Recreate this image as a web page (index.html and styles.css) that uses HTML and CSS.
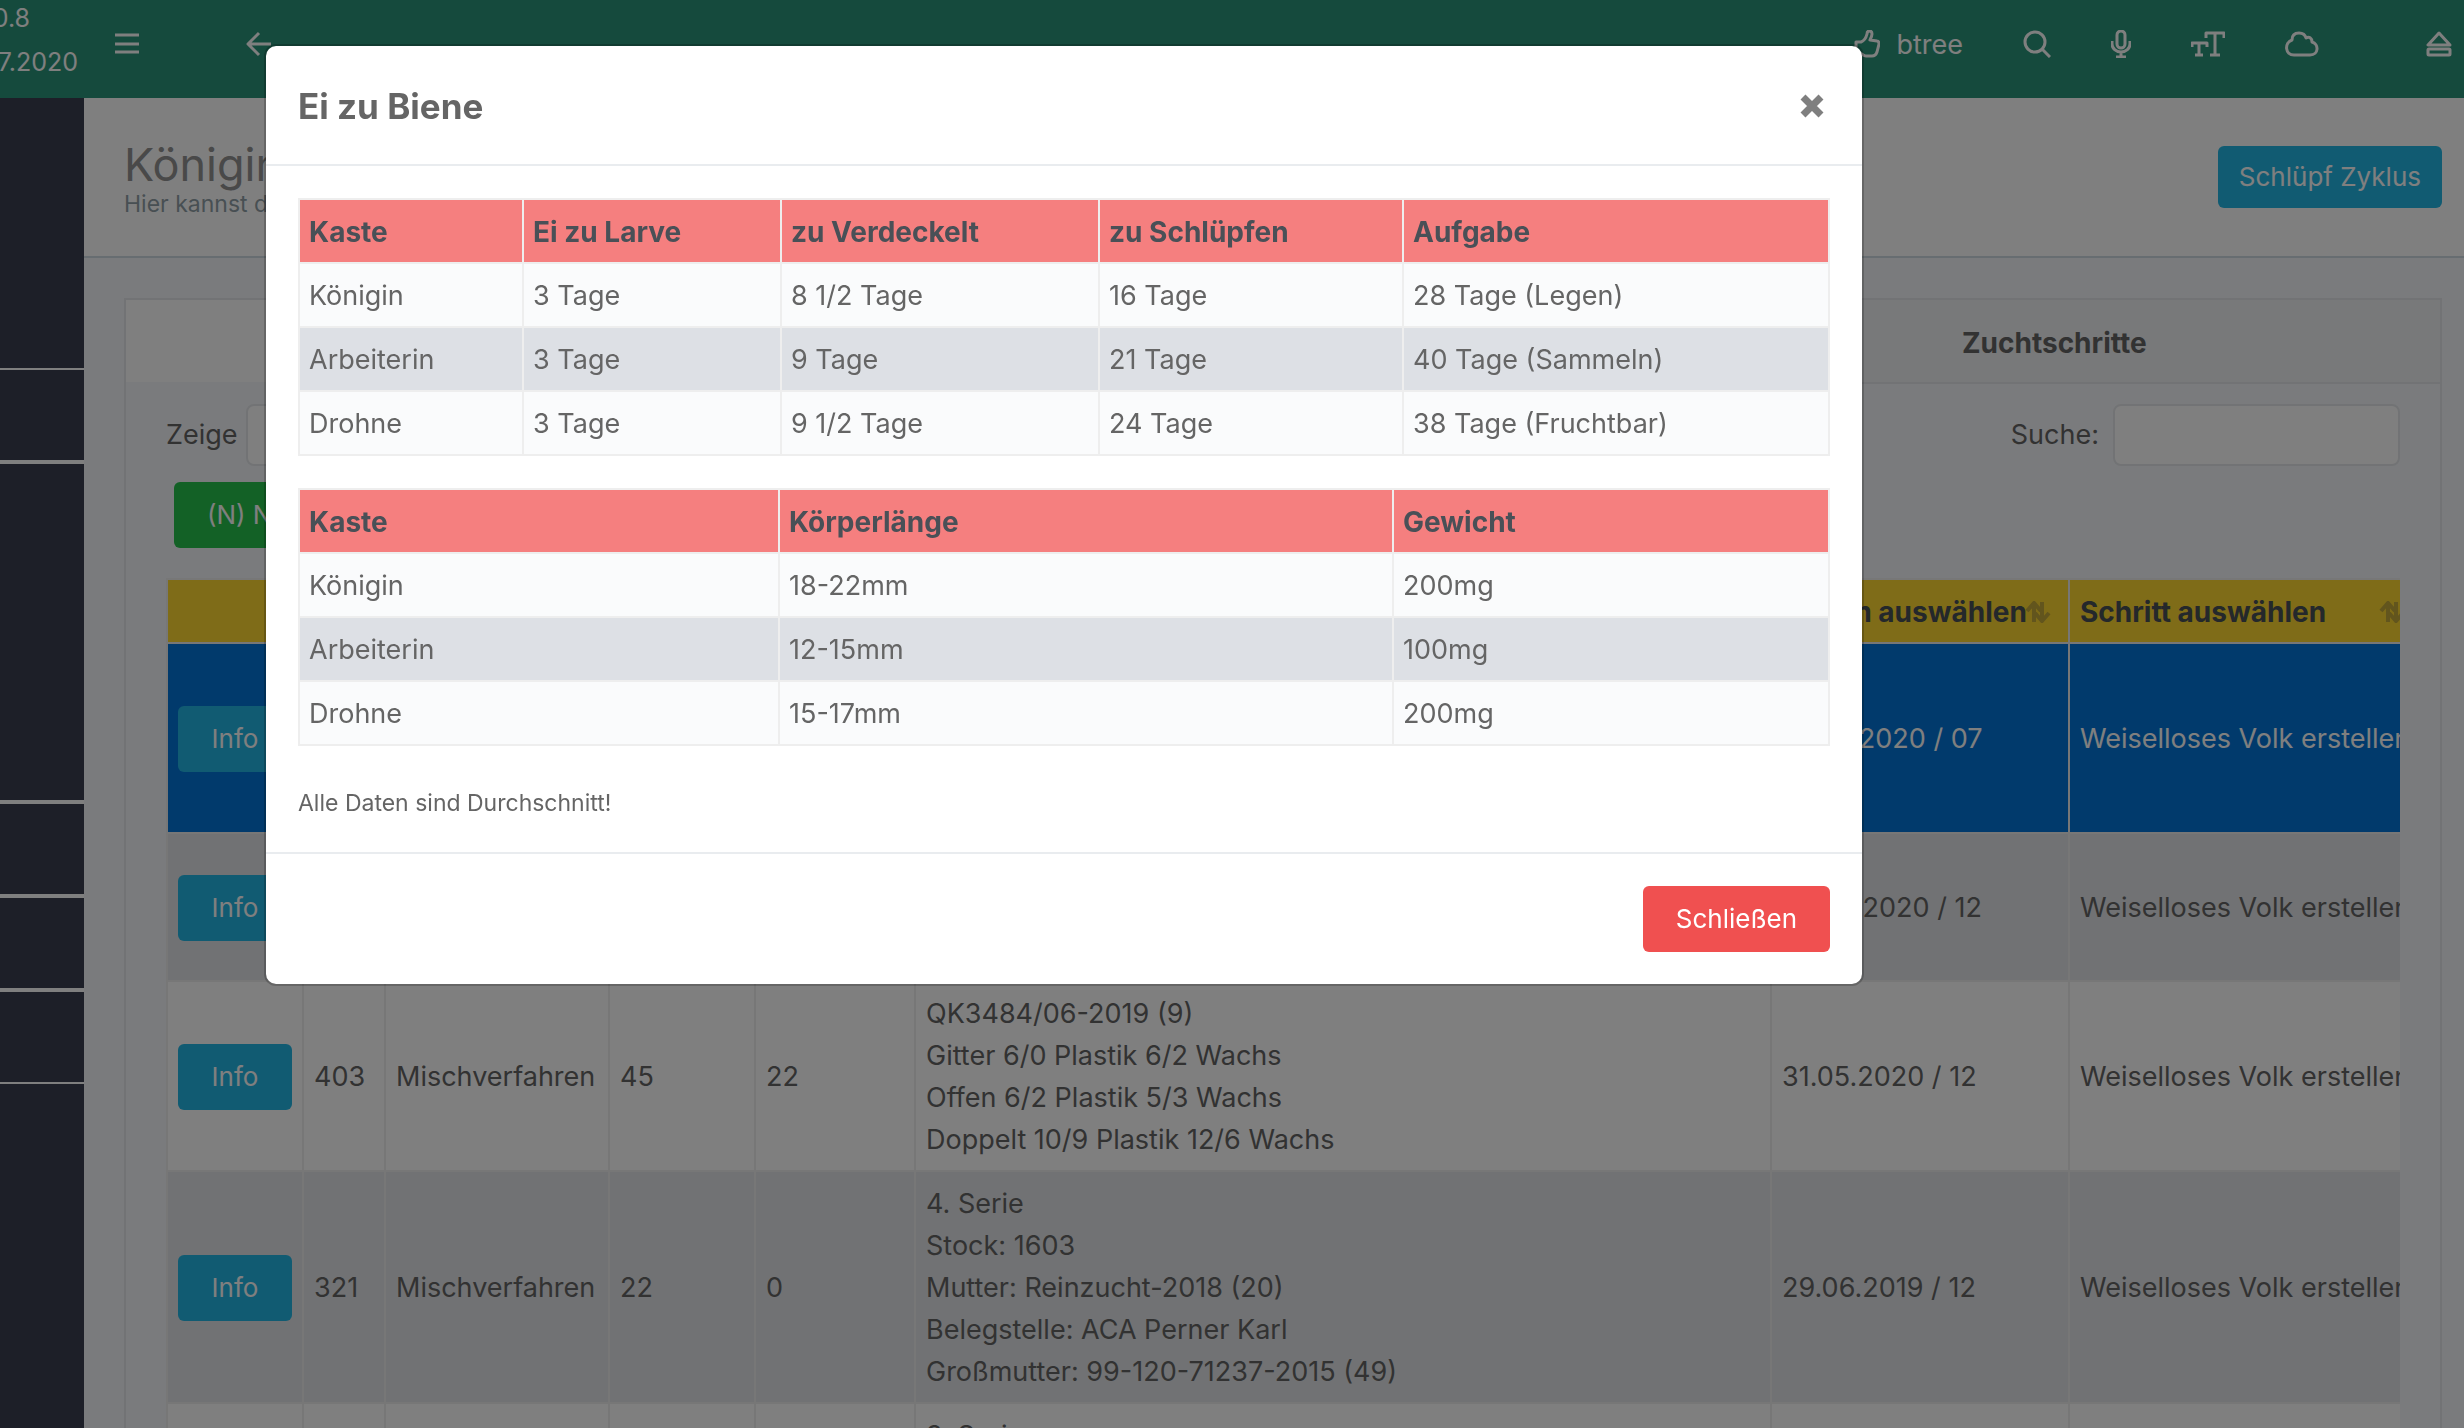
FILE: index.html
```html
<!DOCTYPE html>
<html lang="de">
<head>
<meta charset="utf-8">
<title>Ei zu Biene</title>
<link rel="stylesheet" href="styles.css">
</head>
<body>
<header class="topbar">
  <div class="brand"><span class="brand-version">0.8</span><span class="brand-date">07.2020</span></div>
  <nav class="nav-left" aria-label="Navigation">
    <button class="icon-btn" aria-label="Menü"><svg width="26" height="28" viewBox="0 0 26 28"><path d="M1 5h24M1 14h24M1 22h24"/></svg></button>
    <button class="icon-btn" aria-label="Zurück"><svg width="26" height="28" viewBox="0 0 26 28"><path d="M25 14H2M13 3L2 14l11 11"/></svg></button>
  </nav>
  <nav class="nav-right" aria-label="Werkzeuge">
    <a class="icon-link" href="#"><svg width="26" height="28" viewBox="0 0 26 28"><path d="M2 12h5c3-1 5-4 6-8 0-4 5-4 5 0 0 2-1 4-2 6l7 1c2 0 2 2 2 3l-2 8c-1 3-2 4-5 4h-6c-3 0-4-3-7-3H2z"/></svg>btree</a>
    <button class="icon-btn" aria-label="Suche öffnen"><svg width="28" height="28" viewBox="0 0 28 28"><circle cx="12" cy="12" r="10"/><path d="M19 19l8 8"/></svg></button>
    <button class="icon-btn" aria-label="Mikrofon"><svg width="20" height="28" viewBox="0 0 20 28"><rect x="6" y="1" width="8" height="17" rx="4"/><path d="M1 11v3a9 8 0 0 0 18 0v-3M10 22v5M5 27h10"/></svg></button>
    <button class="icon-btn" aria-label="Schriftgröße"><svg width="34" height="28" viewBox="0 0 34 28"><path d="M15 8V3h18v5M24 3v22M19 25h10M1 17v-4h15v4M8 13v12M4 25h8"/></svg></button>
    <button class="icon-btn" aria-label="Wolke"><svg width="34" height="28" viewBox="0 0 34 28"><path d="M9 25c-9 0-10-12-2-15C7 5 10 3 14 3c4 0 6 1 7 5 3-2 6 0 6 4 7 2 7 13-2 13z"/></svg></button>
    <button class="icon-btn" aria-label="Abmelden"><svg width="26" height="28" viewBox="0 0 26 28"><path d="M13 3L2 15h22z"/><rect x="2" y="19" width="22" height="6" rx="1"/></svg></button>
  </nav>
</header>
<div class="layout">
  <aside class="sidebar">
    <div class="side-block side-first"></div>
    <div class="side-block"></div>
    <div class="side-block side-tall"></div>
    <div class="side-block"></div>
    <div class="side-block"></div>
    <div class="side-block side-last"></div>
  </aside>
  <main class="content">
    <div class="page-head">
      <div>
        <h1 class="page-title">Königinnen</h1>
        <p class="page-sub">Hier kannst du</p>
      </div>
      <button class="btn btn-info btn-head">Schlüpf Zyklus</button>
    </div>
    <section class="panel">
      <div class="tabs" role="tablist">
        <button class="tab tab-active" role="tab" aria-label="Zucht" aria-selected="true"></button>
        <button class="tab" role="tab" aria-label="Bearbeiten"></button>
        <button class="tab" role="tab">Zuchtschritte</button>
      </div>
      <div class="panel-body">
        <div class="filters">
          <label class="filter">Zeige <select class="field field-count"></select></label>
          <label class="filter filter-search">Suche: <input class="field field-search" type="text"></label>
        </div>
        <div class="actions"><button class="btn btn-success">(N) Neu</button></div>
        <div class="table-clip">
          <table class="data">
            <colgroup><col class="c1"><col class="c2"><col class="c3"><col class="c4"><col class="c5"><col class="c6"><col class="c7"><col class="c8"></colgroup>
            <thead>
              <tr><th></th><th></th><th></th><th></th><th></th><th></th>
              <th><span class="th-in">Datum auswählen<svg class="sort" width="26" height="22" viewBox="0 0 26 22"><path d="M9 21V3M2 10l7-8 7 8M17 1v18M10 12l7 8 7-8"/></svg></span></th>
              <th><span class="th-in">Schritt auswählen<svg class="sort" width="26" height="22" viewBox="0 0 26 22"><path d="M9 21V3M2 10l7-8 7 8M17 1v18M10 12l7 8 7-8"/></svg></span></th></tr>
            </thead>
            <tbody>
              <tr class="selected"><td><button class="btn btn-info">Info</button></td><td></td><td></td><td></td><td></td><td><br><br><br><br></td><td>04.07.2020 / 07</td><td>Weiselloses Volk erstellen</td></tr>
              <tr class="odd"><td><button class="btn btn-info">Info</button></td><td></td><td></td><td></td><td></td><td><br><br><br></td><td>06.06.2020 / 12</td><td>Weiselloses Volk erstellen</td></tr>
              <tr><td><button class="btn btn-info">Info</button></td><td>403</td><td>Mischverfahren</td><td>45</td><td>22</td><td>QK3484/06-2019 (9)<br>Gitter 6/0 Plastik 6/2 Wachs<br>Offen 6/2 Plastik 5/3 Wachs<br>Doppelt 10/9 Plastik 12/6 Wachs</td><td>31.05.2020 / 12</td><td>Weiselloses Volk erstellen</td></tr>
              <tr class="odd"><td><button class="btn btn-info">Info</button></td><td>321</td><td>Mischverfahren</td><td>22</td><td>0</td><td>4. Serie<br>Stock: 1603<br>Mutter: Reinzucht-2018 (20)<br>Belegstelle: ACA Perner Karl<br>Großmutter: 99-120-71237-2015 (49)</td><td>29.06.2019 / 12</td><td>Weiselloses Volk erstellen</td></tr>
              <tr><td></td><td></td><td></td><td></td><td></td><td>3. Serie</td><td></td><td></td></tr>
            </tbody>
          </table>
        </div>
      </div>
    </section>
  </main>
</div>
<div class="backdrop"></div>
<div class="modal-wrap">
  <div class="modal" role="dialog" aria-modal="true" aria-labelledby="dlg-title">
    <div class="modal-head">
      <h2 class="modal-title" id="dlg-title">Ei zu Biene</h2>
      <button class="close" aria-label="Dialog beenden"><svg width="36" height="36" viewBox="0 0 36 36"><path d="M9 9l18 18M27 9L9 27"/></svg></button>
    </div>
    <div class="modal-body">
      <table class="facts">
        <colgroup><col class="f1"><col class="f2"><col class="f3"><col class="f4"><col></colgroup>
        <thead><tr><th>Kaste</th><th>Ei zu Larve</th><th>zu Verdeckelt</th><th>zu Schlüpfen</th><th>Aufgabe</th></tr></thead>
        <tbody>
          <tr><td>Königin</td><td>3 Tage</td><td>8 1/2 Tage</td><td>16 Tage</td><td>28 Tage (Legen)</td></tr>
          <tr><td>Arbeiterin</td><td>3 Tage</td><td>9 Tage</td><td>21 Tage</td><td>40 Tage (Sammeln)</td></tr>
          <tr><td>Drohne</td><td>3 Tage</td><td>9 1/2 Tage</td><td>24 Tage</td><td>38 Tage (Fruchtbar)</td></tr>
        </tbody>
      </table>
      <table class="facts">
        <colgroup><col class="g1"><col class="g2"><col></colgroup>
        <thead><tr><th>Kaste</th><th>Körperlänge</th><th>Gewicht</th></tr></thead>
        <tbody>
          <tr><td>Königin</td><td>18-22mm</td><td>200mg</td></tr>
          <tr><td>Arbeiterin</td><td>12-15mm</td><td>100mg</td></tr>
          <tr><td>Drohne</td><td>15-17mm</td><td>200mg</td></tr>
        </tbody>
      </table>
      <p class="note">Alle Daten sind Durchschnitt!</p>
    </div>
    <div class="modal-foot"><button class="btn btn-danger">Schließen</button></div>
  </div>
</div>
</body>
</html>
```
FILE: styles.css
```css
* { box-sizing: border-box; }
html, body { height: 100%; }
body {
  margin: 0;
  overflow: hidden;
  display: flex;
  flex-direction: column;
  background: #f5f7fa;
  color: #656565;
  font: 27px/42px Inter, "Liberation Sans", sans-serif;
}
button, input, select { font: inherit; color: inherit; margin: 0; }
svg { fill: none; stroke: currentColor; stroke-width: 3; stroke-linejoin: round; }

/* top bar */
.topbar {
  flex: none;
  display: flex;
  height: 98px;
  background: #2b957a;
  color: #fff;
}
.brand {
  flex: none;
  width: 84px;
  overflow: hidden;
  display: flex;
  flex-direction: column;
  align-items: flex-end;
  font-size: 25px;
  line-height: 44px;
}
.brand span { padding-right: 6px; }
.brand .brand-version { padding-right: 54px; margin-top: -4px; }
.nav-left, .nav-right { display: flex; align-items: flex-start; padding-top: 30px; }
.nav-left { padding-left: 30px; gap: 106px; }
.nav-right { margin-left: auto; padding-right: 12px; gap: 60px; }
.icon-btn { display: block; padding: 0; border: 0; background: none; line-height: 0; }
.icon-link { display: flex; gap: 16px; color: #fff; text-decoration: none; line-height: 30px; }
.nav-right .icon-btn:last-child { margin-left: 47px; }

/* sidebar */
.layout { flex: 1; min-height: 0; display: flex; overflow: hidden; }
.sidebar { flex: none; width: 84px; background: #3a3f51; }
.side-block { height: 94px; border-bottom: 4px solid #fff; }
.side-first { height: 272px; border-bottom-width: 2px; }
.side-tall { height: 340px; }
.side-last { height: 92px; border-bottom-width: 2px; }

/* page */
.content { flex: 1; min-width: 0; }
.page-head {
  display: flex;
  justify-content: space-between;
  align-items: center;
  height: 160px;
  padding: 0 22px 0 40px;
  background: #fff;
  border-bottom: 2px solid #cfdbe2;
}
.page-title { margin: 0; padding-top: 4px; font-size: 45px; line-height: 50px; font-weight: 400; color: #929292; }
.page-sub { margin: 0; font-size: 23px; line-height: 28px; color: #909fa7; }
.btn {
  height: 66px;
  padding: 0 33px;
  border: 0;
  border-radius: 6px;
  color: #fff;
  font-size: 26px;
  line-height: 38px;
  white-space: nowrap;
}
.btn-head { height: 62px; padding: 0 21px; }
.btn-info { background: #23b7e5; }
.btn-success { background: #27c24c; }
.btn-danger { background: #f05050; }
.panel { margin: 40px 22px 0 40px; border: 2px solid #e4e7ea; border-bottom: 0; }
.tabs { display: grid; grid-template-columns: repeat(3, 1fr); }
.tab {
  height: 84px;
  padding: 4px 0 0;
  border: 0;
  border-bottom: 2px solid #e4e7ea;
  background: #f0f2f4;
  font-size: 28px;
  font-weight: 700;
}
.tab-active { background: #fff; border-bottom-color: #f5f7fa; }
.panel-body { padding: 20px 40px 0; }
.filters { display: flex; justify-content: space-between; }
.filter { display: flex; align-items: center; gap: 8px; }
.filter-search { gap: 14px; }
.field { height: 62px; border: 2px solid #e4e7ea; border-radius: 8px; background: #fff; }
.field-count { width: 120px; }
.field-search { width: 287px; }
.actions { padding: 16px 8px 30px; display: flex; }
.table-clip { overflow: hidden; }

/* breeding table */
.data { border-collapse: collapse; table-layout: fixed; width: 2256px; background: #fff; }
.data th, .data td { border: 2px solid #eee; padding: 11px 9px 9px 10px; text-align: left; white-space: nowrap; }
.data th { padding-right: 17px; background: #ffd831; color: #495057; height: 64px; font-size: 28px; }
.data td .btn { display: block; width: 114px; padding: 0; }
.c1 { width: 136px; } .c2 { width: 82px; } .c3 { width: 224px; } .c4 { width: 146px; }
.c5 { width: 160px; } .c6 { width: 856px; } .c7 { width: 298px; } .c8 { width: 354px; }
.th-in { display: flex; justify-content: space-between; align-items: center; }
.sort { flex: none; margin-left: -6px; color: #c4aa3a; stroke-width: 4; stroke-linejoin: miter; }
.odd { background: #e2e4e8; }
.selected { background: #0275d8; color: #fff; }

.backdrop { position: fixed; inset: 0; background: rgba(0, 0, 0, .5); }
.modal-wrap { position: fixed; inset: 0 0 0 -336px; display: flex; justify-content: center; align-items: flex-start; padding-top: 44px; }
.modal { width: 1600px; background: #fff; background-clip: padding-box; border: 2px solid rgba(0, 0, 0, .2); border-radius: 12px; }
.modal-head { display: flex; justify-content: space-between; align-items: center; height: 120px; padding: 2px 32px 0; border-bottom: 2px solid #e9ecef; }
.modal-title { margin: 0; font-size: 35px; line-height: 52px; font-weight: 700; }
.close { padding: 0; border: 0; background: none; color: #7f7f7f; line-height: 0; }
.close svg { stroke-width: 7; }
.modal-body { padding: 32px; }
.facts { width: 100%; border-collapse: collapse; table-layout: fixed; margin-bottom: 32px; }
.facts th, .facts td { height: 64px; padding: 11px 9px 9px; border: 2px solid #eee; text-align: left; }
.facts th { background: #f57f7f; color: #495057; font-size: 28px; }
.facts td { background: #fafbfc; }
.facts tr:nth-child(2) td { background: #dde0e5; }
.f1 { width: 224px; } .f2 { width: 258px; } .f3 { width: 318px; } .f4 { width: 304px; }
.g1 { width: 480px; } .g2 { width: 614px; }
.note { margin: 40px 0 0; font-size: 23px; line-height: 34px; }
.modal-foot { display: flex; justify-content: flex-end; padding: 32px; border-top: 2px solid #e9ecef; }
```
